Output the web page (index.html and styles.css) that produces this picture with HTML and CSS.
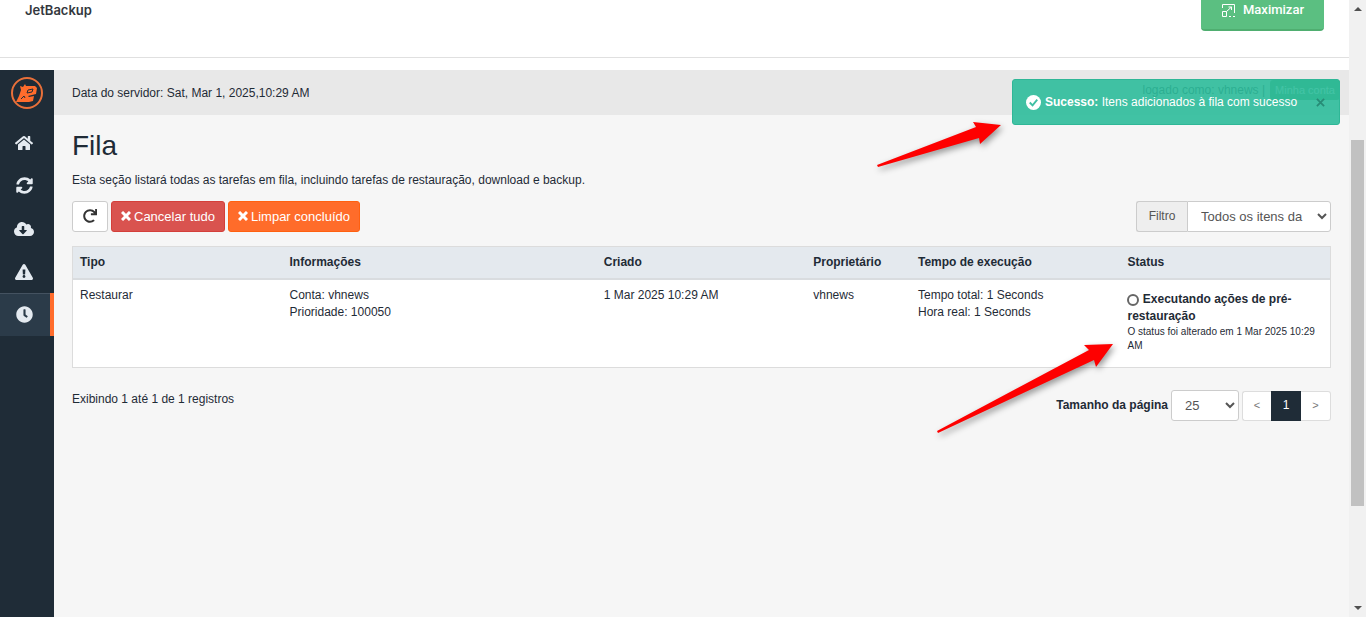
FILE: index.html
```
<!DOCTYPE html>
<html lang="pt-BR">

<head>
    <meta charset="UTF-8">
    <meta name="viewport" content="width=device-width, initial-scale=1.0">
    <title>JetBackup - Fila</title>
    <link rel="stylesheet" href="styles.css">
</head>

<body>
    <div class="page">
        <header class="header">
            <span class="header-title">JetBackup</span>
            <button type="button" class="btn-max">
                <svg width="13" height="14" viewBox="0 0 13 14" fill="none" stroke="currentColor">
                    <path d="M.5 5V1.500H12.500V10M.5 8.500h4v5h-4zM4.500 8.500L9.500 4M6.500 4H9.500V7M7 13.500h2M11 13.500h2" />
                </svg>
                Maximizar
            </button>
        </header>

        <div class="app">
            <nav class="sidebar">
                <a href="#" class="logo" aria-label="JetBackup">
                    <svg width="32" height="32" viewBox="0 0 32 32">
                        <circle cx="16" cy="16" r="15" fill="none" stroke="#e8703a" stroke-width="2" />
                        <path fill="#ff6c2c" d="M5 25L7 21L8 19L10 13L9 9L12 10L14 7L15 9L24 9L26 11L25 17L17 19L18 20L23 19L22 24L18 25Z" />
                        <path fill="none" stroke="#1f2c37" d="M16 16L17 13L22 12L21 15L16 16M10 22L13 19L14 21" />
                    </svg>
                </a>
                <a href="#" class="nav-item" aria-label="Início">
                    <svg width="18" height="16" viewBox="0 0 576 512"><path d="M280.370 148.260L96 300.110V464a16 16 0 0 0 16 16l112.060-.29a16 16 0 0 0 15.920-16V368a16 16 0 0 1 16-16h64a16 16 0 0 1 16 16v95.640a16 16 0 0 0 16 16.050L464 480a16 16 0 0 0 16-16V300L295.670 148.260a12.190 12.190 0 0 0-15.300 0zM571.600 251.470L488 182.560V44.050a12 12 0 0 0-12-12h-56a12 12 0 0 0-12 12v72.610L318.470 43a48 48 0 0 0-61 0L4.340 251.470a12 12 0 0 0-1.600 16.900l25.500 31A12 12 0 0 0 45.150 301l235.220-193.740a12.190 12.190 0 0 1 15.300 0L530.900 301a12 12 0 0 0 16.900-1.600l25.500-31a12 12 0 0 0-1.700-16.930z" /></svg>
                </a>
                <a href="#" class="nav-item" aria-label="Restaurar">
                    <svg width="17" height="17" viewBox="0 0 512 512"><path d="M370.720 133.280C339.458 104.008 298.888 87.962 255.848 88c-77.458.068-144.328 53.178-162.791 126.850-1.344 5.363-6.122 9.150-11.651 9.150H24.103c-7.498 0-13.194-6.807-11.807-14.176C33.933 94.924 134.813 8 256 8c66.448 0 126.791 26.136 171.315 68.685L463.030 40.970C478.149 25.851 504 36.559 504 57.941V192c0 13.255-10.745 24-24 24H345.941c-21.382 0-32.090-25.851-16.971-40.971l41.750-41.749zM32 296h134.059c21.382 0 32.090 25.851 16.971 40.971l-41.750 41.750c31.262 29.273 71.835 45.319 114.876 45.280 77.418-.07 144.315-53.144 162.787-126.849 1.344-5.363 6.122-9.150 11.651-9.150h57.304c7.498 0 13.194 6.807 11.807 14.176C478.067 417.076 377.187 504 256 504c-66.448 0-126.791-26.136-171.315-68.685L48.970 471.030C33.851 486.149 8 475.441 8 454.059V320c0-13.255 10.745-24 24-24z" /></svg>
                </a>
                <a href="#" class="nav-item" aria-label="Downloads">
                    <svg width="20" height="16" viewBox="0 0 640 512"><path d="M537.600 226.600c4.100-10.700 6.400-22.400 6.400-34.600 0-53-43-96-96-96-19.700 0-38.100 6-53.300 16.200C367 64.200 315.300 32 256 32c-88.400 0-160 71.600-160 160 0 2.700.1 5.400.2 8.100C40.200 219.800 0 273.200 0 336c0 79.500 64.500 144 144 144h368c70.700 0 128-57.300 128-128 0-61.900-44-113.600-102.400-125.400zm-132.900 88.700L299.300 420.700c-6.200 6.200-16.400 6.200-22.600 0L171.300 315.300c-10.100-10.100-2.900-27.300 11.300-27.300H248V176c0-8.800 7.200-16 16-16h48c8.800 0 16 7.200 16 16v112h65.400c14.200 0 21.400 17.200 11.300 27.300z" /></svg>
                </a>
                <a href="#" class="nav-item" aria-label="Alertas">
                    <svg width="18" height="16" viewBox="0 0 576 512"><path d="M569.517 440.013C587.975 472.007 564.806 512 527.940 512H48.054c-36.937 0-59.999-40.055-41.577-71.987L246.423 23.985c18.467-32.009 64.720-31.951 83.154 0l239.940 416.028zM288 354c-25.405 0-46 20.595-46 46s20.595 46 46 46 46-20.595 46-46-20.595-46-46-46zm-43.673-165.346l7.418 136c.347 6.364 5.609 11.346 11.982 11.346h48.546c6.373 0 11.635-4.982 11.982-11.346l7.418-136c.375-6.874-5.098-12.654-11.982-12.654h-63.383c-6.884 0-12.356 5.780-11.981 12.654z" /></svg>
                </a>
                <a href="#" class="nav-item active" aria-label="Fila">
                    <svg width="17" height="17" viewBox="0 0 512 512"><path d="M256,8C119,8,8,119,8,256S119,504,256,504,504,393,504,256,393,8,256,8Zm92.490,313h0l-20,25a16,16,0,0,1-22.490,2.500h0l-67-49.720a40,40,0,0,1-15-31.230V112a16,16,0,0,1,16-16h32a16,16,0,0,1,16,16V256l58,42.500A16,16,0,0,1,348.490,321Z" /></svg>
                </a>
            </nav>

            <div class="main">
                <div class="topbar">
                    <span>Data do servidor: Sat, Mar 1, 2025,10:29 AM</span>
                    <div class="account">
                        <span>logado como: vhnews |</span>
                        <button type="button" class="btn-account">Minha conta</button>
                    </div>
                </div>

                <div class="alert" role="alert">
                    <svg width="15" height="15" viewBox="0 0 16 16">
                        <circle cx="8" cy="8" r="8" fill="#fff" />
                        <path d="M4 8l3 3 5-6" fill="none" stroke="#3fbfa3" stroke-width="2" />
                    </svg>
                    <span class="alert-text"><b>Sucesso:</b> Itens adicionados à fila com sucesso</span>
                    <button type="button" class="alert-close" aria-label="Fechar">
                        <svg width="9" height="9" viewBox="0 0 10 10"><path d="M1 1l8 8M9 1l-8 8" stroke="currentColor" stroke-width="2" /></svg>
                    </button>
                    <svg class="arrow arrow-alert" width="126" height="48" viewBox="0 0 126 48">
                        <path d="M1 45L100 7L97 2L125 5L104 24L103 18L2 47Z" />
                    </svg>
                </div>

                <div class="content">
                    <h1>Fila</h1>
                    <p class="description">Esta seção listará todas as tarefas em fila, incluindo tarefas de restauração, download e backup.</p>

                    <div class="toolbar">
                        <button type="button" class="btn btn-refresh" aria-label="Atualizar">
                            <svg width="14" height="14" viewBox="0 0 512 512"><path d="M500.330 0h-47.410a12 12 0 0 0-12 12.570l4 82.760A247.420 247.420 0 0 0 256 8C119.340 8 7.900 119.530 8 256.190 8.100 393.070 119.100 504 256 504a247.100 247.100 0 0 0 166.180-63.910 12 12 0 0 0 .48-17.430l-34-34a12 12 0 0 0-16.380-.55A176 176 0 1 1 402.100 157.800l-101.530-4.870a12 12 0 0 0-12.570 12v47.410a12 12 0 0 0 12 12h200.330a12 12 0 0 0 12-12V12a12 12 0 0 0-12-12z" /></svg>
                        </button>
                        <button type="button" class="btn btn-cancel">
                            <svg width="10" height="10" viewBox="0 0 10 10"><path d="M1 1l8 8M9 1l-8 8" stroke="currentColor" stroke-width="3" /></svg>
                            Cancelar tudo
                        </button>
                        <button type="button" class="btn btn-clear">
                            <svg width="10" height="10" viewBox="0 0 10 10"><path d="M1 1l8 8M9 1l-8 8" stroke="currentColor" stroke-width="3" /></svg>
                            Limpar concluído
                        </button>
                        <div class="filter">
                            <label for="filter">Filtro</label>
                            <select id="filter">
                                <option>Todos os itens da</option>
                            </select>
                        </div>
                    </div>

                    <div class="table-box">
                        <table>
                            <thead>
                                <tr>
                                    <th class="col-2">Tipo</th>
                                    <th class="col-3">Informações</th>
                                    <th class="col-2">Criado</th>
                                    <th class="col-1">Proprietário</th>
                                    <th class="col-2">Tempo de execução</th>
                                    <th class="col-2">Status</th>
                                </tr>
                            </thead>
                            <tbody>
                                <tr>
                                    <td>Restaurar</td>
                                    <td>Conta: vhnews<br>Prioridade: 100050</td>
                                    <td>1 Mar 2025 10:29 AM</td>
                                    <td>vhnews</td>
                                    <td>Tempo total: 1 Seconds<br>Hora real: 1 Seconds</td>
                                    <td class="status">
                                        <span class="spinner"></span>
                                        <b>Executando ações de pré-restauração</b>
                                        <small>O status foi alterado em 1 Mar 2025 10:29 AM</small>
                                    </td>
                                </tr>
                            </tbody>
                        </table>
                        <svg class="arrow arrow-status" width="178" height="92" viewBox="0 0 178 92">
                            <path d="M1 89L153 8L148 3L177 2L160 25L158 18L2 91Z" />
                        </svg>
                    </div>

                    <div class="table-footer">
                        <span class="records">Exibindo 1 até 1 de 1 registros</span>
                        <label for="page-size">Tamanho da página</label>
                        <select id="page-size">
                            <option>25</option>
                        </select>
                        <div class="pagination">
                            <a href="#">&lt;</a>
                            <a href="#" class="current">1</a>
                            <a href="#">&gt;</a>
                        </div>
                    </div>
                </div>
            </div>
        </div>
    </div>

    <div class="scrollbar" aria-hidden="true">
        <span class="scroll-up"></span>
        <div class="scroll-track">
            <div class="scroll-thumb"></div>
        </div>
        <span class="scroll-down"></span>
    </div>
</body>

</html>
```
FILE: styles.css
```
* {
    box-sizing: border-box;
    margin: 0;
    padding: 0;
}

body {
    display: flex;
    height: 100vh;
    overflow: hidden;
    background: #fff;
    color: #1f2b36;
    font: 12px/17px "Liberation Sans", Arial, sans-serif;
}

button,
select {
    font-family: inherit;
}

.page {
    flex: 1;
    display: flex;
    flex-direction: column;
    min-width: 0;
}

/* cabeçalho */
.header {
    display: flex;
    justify-content: space-between;
    align-items: flex-start;
    height: 58px;
    margin-bottom: 12px;
    padding: 0 25px;
    border-bottom: 1px solid #e0e0e0;
}

.header-title {
    font: 600 13px/20px Inter, sans-serif;
    color: #33373d;
}

.btn-max {
    display: flex;
    align-items: center;
    gap: 8px;
    padding: 0 20px 9px 21px;
    border: 0;
    border-bottom: 2px solid #4fae70;
    border-radius: 0 0 4px 4px;
    background: #5bbf81;
    color: #fff;
    font: 500 13px/20px Roboto, sans-serif;
}

.app {
    flex: 1;
    display: flex;
}

/* menu lateral */
.sidebar {
    width: 54px;
    background: #1f2c37;
}

.logo {
    position: relative;
    display: flex;
    justify-content: center;
    align-items: center;
    height: 45px;
    margin-bottom: 6px;
}

/* seta ao lado do logo */
.logo::after {
    content: "";
    position: absolute;
    left: 100%;
    border: 8px solid transparent;
    border-left-color: #1f2c37;
    border-right: 0;
}

.nav-item {
    display: flex;
    justify-content: center;
    align-items: center;
    height: 43px;
    padding-right: 2px;
    border-right: 4px solid transparent;
}

.nav-item svg {
    fill: #e4eaf0;
}

.nav-item.active {
    background: #2b3b49;
    border-right-color: #ff6c2c;
    box-shadow: inset 0 1px #445260;
}

.main {
    flex: 1;
    position: relative;
    background: #f6f6f6;
}

.topbar {
    display: flex;
    justify-content: space-between;
    align-items: center;
    height: 45px;
    padding: 1px 9px 0 18px;
    background: #e8e8e8;
}

.account {
    display: flex;
    align-items: center;
    gap: 5px;
    height: 38px;
    align-self: flex-start;
}

.btn-account {
    padding: 0 5px;
    border: 0;
    border-radius: 3px;
    background: #4b9a5f;
    color: #fff;
    font-size: 11px;
    line-height: 20px;
}

/* aviso de sucesso */
.alert {
    position: absolute;
    top: 9px;
    right: 9px;
    display: flex;
    align-items: center;
    width: 328px;
    height: 46px;
    padding: 1px 14px 0 13px;
    border: 1px solid #2fb797;
    border-radius: 3px;
    background: rgba(45, 188, 155, 0.9);
    color: #fff;
}

.alert-text {
    flex: 1;
    margin-left: 4px;
}

.alert-close {
    display: flex;
    border: 0;
    background: none;
    color: #278c76;
}

.arrow {
    position: absolute;
    overflow: visible;
    fill: #fe0000;
    filter: drop-shadow(2px 3px 3px rgba(0, 0, 0, 0.4));
}

.arrow-alert {
    top: 40px;
    right: 337px;
}

.arrow-status {
    top: 95px;
    right: 216px;
}

.content {
    padding: 15px 18px;
}

h1 {
    font-size: 28px;
    font-weight: normal;
    line-height: 32px;
}

.description {
    margin: 10px 0 12px;
}

.toolbar {
    display: flex;
    gap: 3px;
    margin-bottom: 14px;
}

.btn {
    display: flex;
    justify-content: center;
    align-items: center;
    gap: 3px;
    height: 31px;
    padding: 0 9px 1px;
    border: 1px solid;
    border-radius: 3px;
    color: #fff;
    font-size: 13px;
}

.btn-refresh {
    width: 36px;
    border-color: #ccc;
    background: #fff;
    fill: #333;
}

.btn-cancel {
    border-color: #d43f3a;
    background: #d9534f;
}

.btn-clear {
    border-color: #ff6010;
    background: #ff6c2a;
}

select {
    border: 1px solid #ccc;
    border-radius: 3px;
    background: #fff;
    color: #555;
    font-size: 13px;
}

.filter {
    display: flex;
    height: 31px;
    margin-left: auto;
}

.filter label {
    width: 51px;
    border: 1px solid #ccc;
    border-right: 0;
    border-radius: 3px 0 0 3px;
    background: #eee;
    color: #555;
    line-height: 28px;
    text-align: center;
}

.filter select {
    width: 144px;
    padding-left: 9px;
    border-radius: 0 3px 3px 0;
}

/* tabela */
.table-box {
    position: relative;
    margin-bottom: 22px;
    border: 1px solid #dcdcdc;
    background: #fff;
}

table {
    width: 100%;
    border-collapse: collapse;
    table-layout: fixed;
}

th {
    height: 32px;
    padding: 0 7px 1px;
    border-bottom: 2px solid #d9dcdf;
    background: #e4e9ee;
    text-align: left;
}

td {
    padding: 7px 7px 14px;
    vertical-align: top;
}

.col-1 {
    width: 8.333%;
}

.col-2 {
    width: 16.667%;
}

.col-3 {
    width: 25%;
}

.status {
    padding-top: 11px;
}

.status small {
    display: block;
    font-size: 10px;
    line-height: 14px;
}

.spinner {
    display: inline-block;
    width: 12px;
    height: 12px;
    border: 2px solid #666;
    border-radius: 50%;
    vertical-align: text-bottom;
}

.table-footer {
    display: flex;
    align-items: center;
    gap: 3px;
}

.records {
    margin-right: auto;
    padding-bottom: 13px;
}

.table-footer label {
    font-weight: bold;
}

.table-footer select {
    width: 68px;
    height: 31px;
    padding-left: 9px;
}

.pagination {
    display: flex;
}

.pagination a {
    width: 30px;
    height: 30px;
    border: 1px solid #ddd;
    background: #fff;
    color: #777;
    font-size: 11px;
    line-height: 27px;
    text-align: center;
    text-decoration: none;
}

.pagination a:first-child {
    width: 29px;
    border-right: 0;
    border-radius: 3px 0 0 3px;
}

.pagination a:last-child {
    border-left: 0;
    border-radius: 0 3px 3px 0;
}

.pagination .current {
    border-color: #1f2c37;
    background: #1f2c37;
    color: #fff;
    font-size: 12px;
}

/* barra de rolagem */
.scrollbar {
    display: flex;
    flex-direction: column;
    width: 17px;
    padding: 7px 2px;
    background: #f1f1f1;
}

.scroll-up,
.scroll-down {
    align-self: center;
    border: 4px solid transparent;
}

.scroll-up {
    border-top: 0;
    border-bottom-color: #505050;
}

.scroll-down {
    border-bottom: 0;
    border-top-color: #505050;
}

.scroll-track {
    flex: 1;
    padding: 129px 0 100px;
}

.scroll-thumb {
    height: 100%;
    background: #c1c1c1;
}
```
